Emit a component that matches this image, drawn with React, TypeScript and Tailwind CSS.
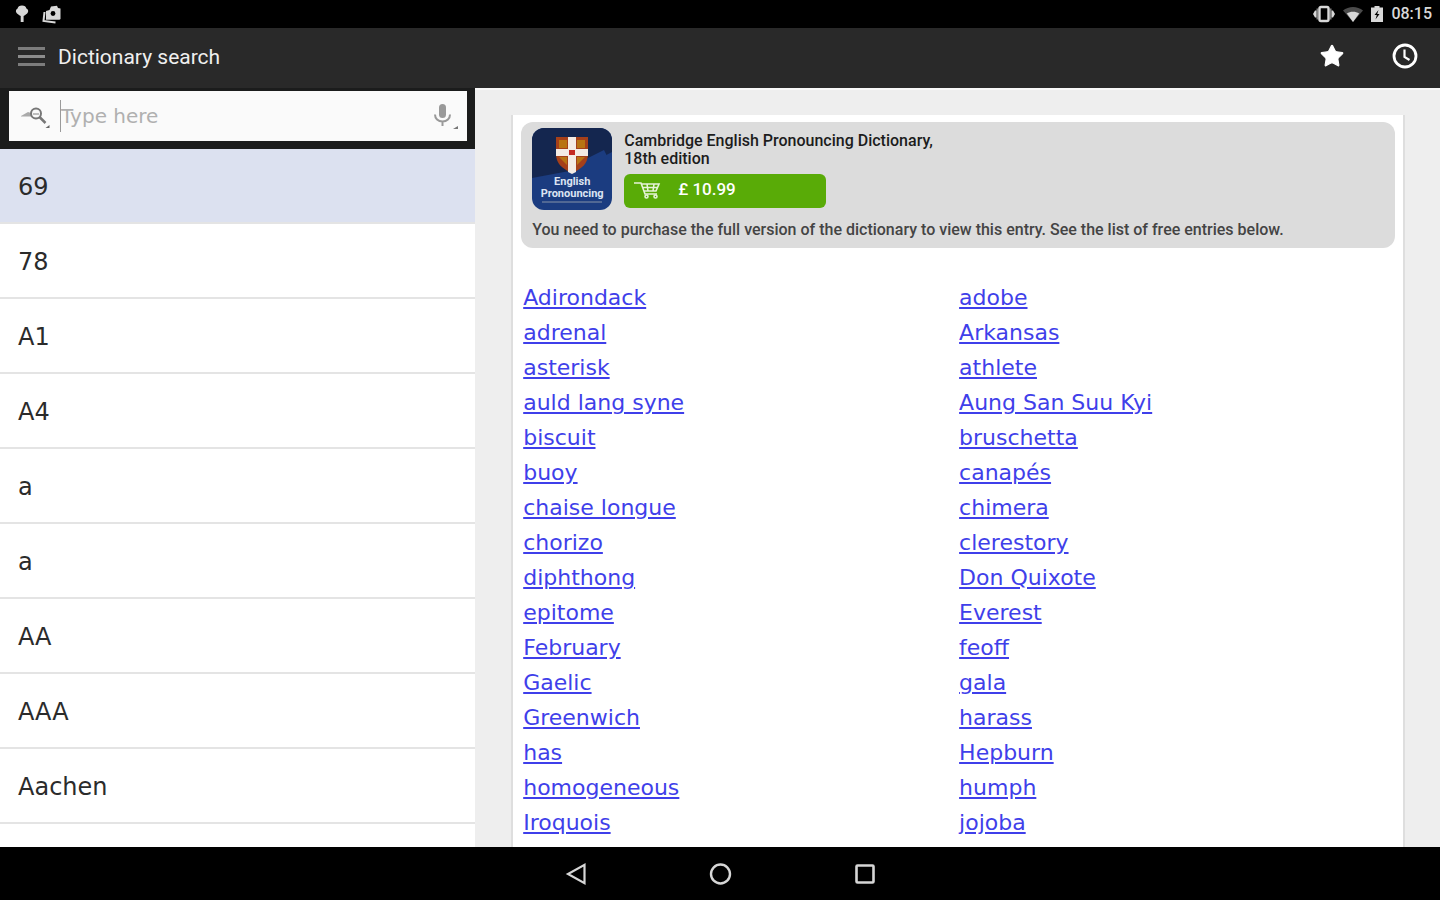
import React, { useState } from 'react';
import { Star } from 'lucide-react';

const ENTRIES = ['69', '78', 'A1', 'A4', 'a', 'a', 'AA', 'AAA', 'Aachen'];

const FREE_ENTRIES = [
  ['Adirondack', 'adobe'],
  ['adrenal', 'Arkansas'],
  ['asterisk', 'athlete'],
  ['auld lang syne', 'Aung San Suu Kyi'],
  ['biscuit', 'bruschetta'],
  ['buoy', 'canapés'],
  ['chaise longue', 'chimera'],
  ['chorizo', 'clerestory'],
  ['diphthong', 'Don Quixote'],
  ['epitome', 'Everest'],
  ['February', 'feoff'],
  ['Gaelic', 'gala'],
  ['Greenwich', 'harass'],
  ['has', 'Hepburn'],
  ['homogeneous', 'humph'],
  ['Iroquois', 'jojoba'],
];

const StatusBar: React.FC = () => (
  <div className="flex h-7 shrink-0 items-center justify-between bg-black pl-3 pr-2 text-[#d8d8d8]">
    <div className="flex items-center gap-2.5">
      {/* tree */}
      <svg viewBox="0 0 20 20" className="h-5 w-5" fill="currentColor">
        <path d="M10 1.500c2.600 0 4 1.300 4.400 3 1.800.8 2.200 2.600 1.400 4-.6 1.400-2.400 2.300-4.200 3.500V18H8.700v-6C6.800 10.800 5 10 4.300 8.500c-.8-1.400-.3-3.200 1.300-4C6 2.800 7.400 1.500 10 1.500z" />
      </svg>
      {/* stacked camera */}
      <svg viewBox="0 0 20 20" className="h-5 w-5" fill="none">
        <path d="M2.500 8L1.500 17l12 1.500" stroke="currentColor" strokeWidth="2" />
        <path d="M4 7l3.500-1L9 2.500l6-.8L16 4l2.500.5V15l-1 .8H4z" fill="currentColor" />
        <circle cx="11" cy="9.500" r="2.400" fill="#000" />
      </svg>
    </div>
    <div className="flex items-center gap-2">
      {/* vibrate */}
      <svg viewBox="0 0 22 18" className="h-[18px] w-[22px]" fill="currentColor">
        <path d="M0 9l2-3.500 1.500 0v7L2 12.500zM22 9l-2-3.500h-1.500v7H20z" />
        <path d="M3.500 3.500h2v11h-2zM16.500 3.500h2v11h-2z" opacity=".6" />
        <rect x="6.500" y="2" width="9" height="14" rx="1.500" fill="none" stroke="currentColor" strokeWidth="2.400" />
      </svg>
      {/* wifi */}
      <svg viewBox="0 0 20 18" className="h-[18px] w-5" fill="currentColor">
        <path d="M0 5.500C5.500.8 14.500.8 20 5.500L10 17z" opacity=".35" />
        <path d="M3.800 8.500c3.500-2.400 8.900-2.400 12.400 0L10 17z" />
      </svg>
      {/* battery */}
      <svg viewBox="0 0 12 18" className="h-[18px] w-3">
        <path d="M3.500 1h5v1.500H12V17H0V2.500h3.500z" fill="currentColor" />
        <path d="M7.500 5L3.500 10h2.300L4.500 14.500 8.500 9H6.200z" fill="#000" />
      </svg>
      <span className="text-base font-medium leading-5">08:15</span>
    </div>
  </div>
);

const AppBar: React.FC = () => (
  <header className="flex h-[60px] shrink-0 items-center bg-[#292929] pb-1 pl-[18px] pr-[21px]">
    <button type="button" aria-label="Menu" className="flex w-[27px] flex-col gap-[5px]">
      <span className="h-[3px] bg-[#7c7c7c]" />
      <span className="h-[3px] bg-[#8c8c8c]" />
      <span className="h-[3px] bg-[#7c7c7c]" />
    </button>
    <h1 className="ml-[13px] flex-1 pt-0.5 text-[21px] leading-7 text-[#efefef]">Dictionary search</h1>
    <div className="flex items-center gap-[46px] text-white">
      <button type="button" aria-label="Favourites">
        <Star className="h-[26px] w-[26px]" fill="currentColor" strokeWidth={1} strokeLinejoin="miter" />
      </button>
      <button type="button" aria-label="History">
        <svg viewBox="0 0 28 28" className="h-7 w-7" fill="none" stroke="currentColor">
          <circle cx="14" cy="14" r="11" strokeWidth="2.800" />
          <path d="M13.500 7.500v7.500l5 3" strokeWidth="2.200" />
        </svg>
      </button>
    </div>
  </header>
);

const SearchBox: React.FC = () => {
  const [query, setQuery] = useState('');

  return (
    <div className="shrink-0 bg-[#1b1c1c] pb-2 pl-[9px] pr-2 pt-[3px]">
      <div className="flex h-[50px] items-center bg-[#fafafa] pl-3 pr-2">
        <label htmlFor="search" className="shrink-0" aria-label="Search the dictionary">
          <svg viewBox="0 0 30 26" className="h-[26px] w-[30px]" fill="none">
            <path d="M0 13l7-4 3 1v3.500H0z" fill="#aaa" />
            <circle cx="15" cy="10.500" r="5" stroke="#777" strokeWidth="2" />
            <path d="M12 11h6" stroke="#aaa" strokeWidth="1.500" />
            <path d="M18.500 14l6 6" stroke="#777" strokeWidth="2.500" />
            <path d="M28.500 22v3h-4z" fill="#666" />
          </svg>
        </label>
        <div className="ml-[9px] h-8 w-px bg-[#9a9a9a]" />
        <input
          id="search"
          type="text"
          value={query}
          onChange={(e) => setQuery(e.target.value)}
          placeholder="Type here"
          className="min-w-0 flex-1 bg-transparent font-['DejaVu_Sans',sans-serif] text-xl text-black outline-none placeholder:text-[#b0b0b0]"
        />
        <button type="button" aria-label="Voice search">
          <svg viewBox="0 0 28 28" className="h-7 w-7" fill="none">
            <rect x="8" y="2" width="7" height="14" rx="3.500" fill="#999" />
            <path d="M4 12.500c0 4 3 7 7.500 7s7.500-3 7.500-7M11.500 19.500V24" stroke="#999" strokeWidth="2" />
            <path d="M27 24v3h-5z" fill="#777" />
          </svg>
        </button>
      </div>
    </div>
  );
};

const AppLogo: React.FC = () => (
  <div className="relative h-[82px] w-20 shrink-0 overflow-hidden rounded-xl bg-[#1b3c80]">
    <svg viewBox="0 0 80 82" className="block h-full w-full">
      <path d="M0 0h80v24L48 41 0 50z" fill="#14264f" />
      <path d="M48 34l24-12 8 16v12H36z" fill="#1b3c80" />
      <path d="M24 9h32v17c0 9-6 15-16 19-10-4-16-10-16-19z" fill="#a5401a" />
      <path d="M27 12h8v8h-8zM45 12h8v8h-8zM27 29h8v8zM45 29h8l-8 8z" fill="#b87413" />
      <path d="M36 9h8v12h12v7H44v16l-4 2-4-2V28H24v-7h12z" fill="#f4ebe4" />
      <path d="M37 22h6v5h-6z" fill="#c42a22" />
      <path d="M10 74h60" stroke="#8793a8" strokeWidth="1" />
    </svg>
    <p className="absolute inset-x-0 top-12 text-center text-[11px] font-bold leading-3 text-[#dce4f2]">
      English
      <br />
      Pronouncing
    </p>
  </div>
);

const PurchaseBanner: React.FC = () => (
  <section className="rounded-xl bg-[#dcdcdc] px-[11px] pb-2 pt-1.5">
    <div className="flex gap-3">
      <AppLogo />
      <div>
        <h2 className="pt-1 text-base font-medium leading-[18px] text-[#1c1c1c]">
          Cambridge English Pronouncing Dictionary,
          <br />
          18th edition
        </h2>
        <button
          type="button"
          className="mt-1.5 flex h-[34px] w-[202px] items-center gap-4 rounded-md bg-[#59ab07] pb-0.5 pl-2.5 text-[17px] font-medium text-white"
        >
          <svg viewBox="0 0 28 20" className="h-5 w-7" fill="none" stroke="#e6f3d8" strokeWidth="1.600">
            <path d="M0 3h7l4 11h12M8 4h17l-3 7H10M13 4l1 7M20 4l-1 7M9 7.500h15" />
            <circle cx="12.500" cy="16.500" r="1.500" />
            <circle cx="21.500" cy="16.500" r="1.500" />
          </svg>
          £ 10.99
        </button>
      </div>
    </div>
    <p className="mt-2.5 text-base font-medium leading-5 text-[#444444]">
      You need to purchase the full version of the dictionary to view this entry. See the list of free entries below.
    </p>
  </section>
);

const NavBar: React.FC = () => (
  <nav className="flex h-[53px] shrink-0 items-center justify-center gap-[120px] bg-black text-[#d6d6d6]">
    <button type="button" aria-label="Back">
      <svg viewBox="0 0 24 24" className="h-6 w-6" fill="none" stroke="currentColor" strokeWidth="2.200">
        <path d="M20.500 2.800v18.400L4 12z" />
      </svg>
    </button>
    <button type="button" aria-label="Home">
      <svg viewBox="0 0 24 24" className="h-6 w-6" fill="none" stroke="currentColor" strokeWidth="2.400">
        <circle cx="12.500" cy="12" r="9.500" />
      </svg>
    </button>
    <button type="button" aria-label="Recent apps">
      <svg viewBox="0 0 24 24" className="h-6 w-6" fill="none" stroke="currentColor" strokeWidth="2.600">
        <rect x="4.500" y="3.500" width="17" height="17" rx="1" />
      </svg>
    </button>
  </nav>
);

export default function App() {
  const [selected, setSelected] = useState(0);

  return (
    <div className="flex h-screen flex-col overflow-hidden bg-[#eeeeee] font-['Roboto',sans-serif]">
      <StatusBar />
      <AppBar />
      <main className="flex min-h-0 flex-1">
        <aside className="flex w-[33%] shrink-0 flex-col bg-white">
          <SearchBox />
          <ul className="min-h-0 flex-1 overflow-hidden">
            {ENTRIES.map((entry, i) => (
              <li key={i}>
                <button
                  type="button"
                  onClick={() => setSelected(i)}
                  className={`block h-[75px] w-full border-b-2 border-[#e4e4e4] pl-[18px] pt-0.5 text-left font-['DejaVu_Sans',sans-serif] text-2xl text-[#2b2b2b] ${
                    i === selected ? 'bg-[#dce1f0]' : 'bg-white'
                  }`}
                >
                  {entry}
                </button>
              </li>
            ))}
          </ul>
        </aside>
        <div className="min-w-0 flex-1 overflow-hidden border-t-2 border-[#f8f8f8] pl-9 pr-[35px] pt-[25px]">
          <article className="min-h-full border-x-2 border-[#dedede] bg-white px-2 pt-[7px]">
            <PurchaseBanner />
            <div className="mt-8 grid grid-cols-2 pl-0.5 font-['DejaVu_Sans',sans-serif] text-[22px] leading-[35px] text-[#3f3fea]">
              {FREE_ENTRIES.flat().map((word) => (
                <div key={word}>
                  <a href={`#${word}`} className="underline">
                    {word}
                  </a>
                </div>
              ))}
            </div>
          </article>
        </div>
      </main>
      <NavBar />
    </div>
  );
}
